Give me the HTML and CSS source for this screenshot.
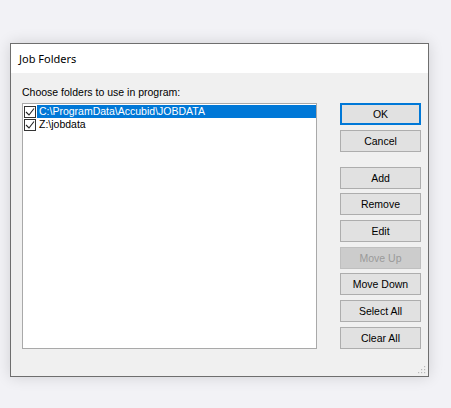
FILE: index.html
```html
<!DOCTYPE html>
<html>
<head>
<meta charset="utf-8">
<link rel="stylesheet" href="styles.css">
</head>
<body>
<div class="dialog">
  <div class="titlebar">Job Folders</div>
  <div class="content">
    <div class="prompt">Choose folders to use in program:</div>
    <div class="list">
      <div class="row">
        <span class="check"><svg viewBox="0 0 10 10" width="10" height="10"><polyline points="1,5 4,8 9,1.5" fill="none" stroke="#222" stroke-width="1.1"/></svg></span>
        <span class="label selected">C:\ProgramData\Accubid\JOBDATA</span>
      </div>
      <div class="row">
        <span class="check"><svg viewBox="0 0 10 10" width="10" height="10"><polyline points="1,5 4,8 9,1.5" fill="none" stroke="#222" stroke-width="1.1"/></svg></span>
        <span class="label">Z:\jobdata</span>
      </div>
    </div>
    <div class="buttons">
      <button class="btn default">OK</button>
      <button class="btn">Cancel</button>
      <button class="btn spaced">Add</button>
      <button class="btn">Remove</button>
      <button class="btn">Edit</button>
      <button class="btn disabled">Move Up</button>
      <button class="btn">Move Down</button>
      <button class="btn">Select All</button>
      <button class="btn">Clear All</button>
    </div>
    <svg class="grip" viewBox="0 0 8 8" width="8" height="8">
      <rect x="6" y="0" width="1.2" height="1.2" fill="#b8b8b8"/>
      <rect x="3" y="3" width="1.2" height="1.2" fill="#b8b8b8"/>
      <rect x="6" y="3" width="1.2" height="1.2" fill="#b8b8b8"/>
      <rect x="0" y="6" width="1.2" height="1.2" fill="#b8b8b8"/>
      <rect x="3" y="6" width="1.2" height="1.2" fill="#b8b8b8"/>
      <rect x="6" y="6" width="1.2" height="1.2" fill="#b8b8b8"/>
    </svg>
  </div>
</div>
</body>
</html>
```
FILE: styles.css
```css
html, body {
  margin: 0;
  padding: 0;
}
body {
  background: #f2f2f6;
  width: 451px;
  height: 408px;
  overflow: hidden;
  padding-top: 43px;
  padding-left: 10px;
  box-sizing: border-box;
  font-family: "Liberation Sans", Arial, sans-serif;
}
.dialog {
  width: 419px;
  height: 334px;
  box-sizing: border-box;
  border: 1px solid #6e6e6e;
  background: #f0f0f0;
  box-shadow: 0 0 14px rgba(0, 0, 0, 0.14);
  display: flex;
  flex-direction: column;
}
.titlebar {
  height: 29px;
  background: #ffffff;
  padding-left: 8px;
  font-family: "Noto Sans", "Open Sans", sans-serif;
  font-size: 11px;
  line-height: 29px;
  color: #000;
}
.content {
  position: relative;
  flex: 1;
  display: grid;
  grid-template-columns: 295px 81px;
  grid-template-rows: auto 1fr;
  column-gap: 23px;
  padding: 12px 0 0 11px;
  align-content: start;
}
.prompt {
  grid-column: 1 / 3;
  font-size: 10.5px;
  line-height: 14px;
  height: 14px;
  margin-bottom: 4px;
  color: #000;
}
.list {
  background: #fff;
  border: 1px solid #a9a9a9;
  height: 246px;
  box-sizing: border-box;
  padding-top: 1px;
}
.row {
  display: flex;
  align-items: center;
  height: 13px;
  font-size: 10.5px;
}
.check {
  width: 12px;
  height: 12px;
  box-sizing: border-box;
  border: 1px solid #333;
  background: #fff;
  margin-left: 1px;
  display: flex;
  align-items: center;
  justify-content: center;
}
.label {
  flex: 1;
  margin-left: 1px;
  padding-left: 2px;
  line-height: 13px;
  height: 13px;
  color: #000;
  white-space: nowrap;
}
.label.selected {
  background: #0078d7;
  color: #fff;
}
.buttons {
  display: flex;
  flex-direction: column;
  gap: 4.67px;
}
.btn {
  height: 22px;
  width: 81px;
  box-sizing: border-box;
  border: 1px solid #adadad;
  background: #e1e1e1;
  font-family: "Liberation Sans", Arial, sans-serif;
  font-size: 10.5px;
  color: #000;
  padding: 0;
  margin: 0;
}
.btn.default {
  border: 2px solid #0078d7;
  box-shadow: inset 0 0 0 0 #fff;
  background: #e5f1fb;
  background: #e1e1e1;
}
.btn.spaced {
  margin-top: 10.33px;
}
.btn.disabled {
  background: #cccccc;
  border-color: #bfbfbf;
  color: #9a9a9a;
}
.grip {
  position: absolute;
  right: 2px;
  bottom: 2px;
}
```
